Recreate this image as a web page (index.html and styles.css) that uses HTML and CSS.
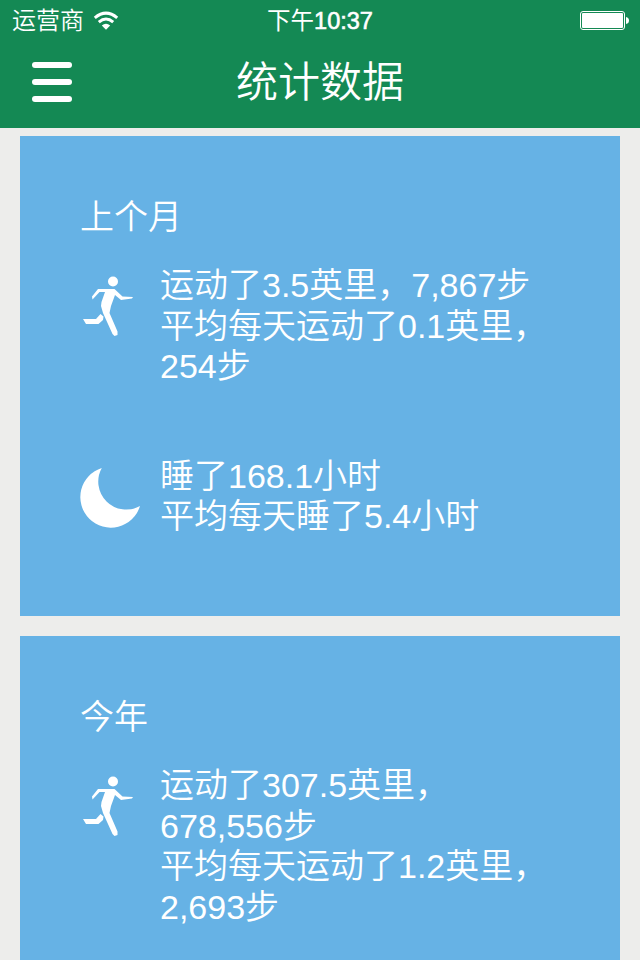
FILE: index.html
```
<!DOCTYPE html>
<html lang="zh-CN">
<head>
    <meta charset="UTF-8">
    <meta name="viewport" content="width=device-width, initial-scale=1.0">
    <title>统计数据</title>
    <link rel="stylesheet" href="styles.css">
</head>
<body>
    <header class="header">
        <div class="status-bar">
            <div class="carrier">
                <span>运营商</span>
                <svg class="wifi" viewBox="0 0 26 20" width="26" height="20">
                    <path d="M1.8 6.8 Q13 -2.6 24.2 6.8" fill="none" stroke="#fff" stroke-width="3"/>
                    <path d="M5.8 11.1 Q13 5 20.2 11.1" fill="none" stroke="#fff" stroke-width="3"/>
                    <path d="M8.8 14.4 Q13 11 17.2 14.4 L13 18.8 Z" fill="#fff"/>
                </svg>
            </div>
            <div class="time">下午<span class="clock">10:37</span></div>
            <div class="battery">
                <svg viewBox="0 0 50 20" width="50" height="20">
                    <rect x="0.5" y="0.5" width="44" height="18" rx="2.5" fill="none" stroke="#fff"/>
                    <rect x="2" y="2" width="41" height="15" rx="1" fill="#fff"/>
                    <path d="M46 6 Q49 6.5 49 9.5 Q49 12.5 46 13 Z" fill="#fff"/>
                </svg>
            </div>
        </div>
        <div class="nav-bar">
            <button class="menu-btn" aria-label="菜单">
                <span></span>
                <span></span>
                <span></span>
            </button>
            <h1 class="title">统计数据</h1>
        </div>
    </header>

    <main class="cards">
        <section class="card">
            <h2 class="card-title">上个月</h2>
            <div class="stat stat-move">
                <svg class="icon" viewBox="0 0 60 60" width="60" height="60">
                    <circle cx="33" cy="5.5" r="5" fill="#fff"/>
                    <path d="M18 13 L34.5 13 L42.5 20.500 L53 21 L52 22.500 L41 24 L35 19 L31 30 L29.500 37 L37.500 55.500 L37.500 59 L34.500 60 L32.500 58 L23 37 L21 30 L21.500 26 L25 16 L19.500 16 L12.500 23.500 L12 20.500 Z M20.500 38 L23.500 40.500 L23 44 L18.500 48 L6 48 L3 43 L16 43 Z" fill="#fff"/>
                </svg>
                <p>运动了3.5英里，7,867步<br>平均每天运动了0.1英里，<br>254步</p>
            </div>
            <div class="stat stat-sleep">
                <svg class="icon" viewBox="0 0 60 60" width="60" height="60">
                    <path d="M21.800 1 A30.500 30.500 0 1 0 60 39 A28 28 0 0 1 21.800 1 Z" fill="#fff"/>
                </svg>
                <p>睡了168.1小时<br>平均每天睡了5.4小时</p>
            </div>
        </section>

        <section class="card">
            <h2 class="card-title">今年</h2>
            <div class="stat stat-move">
                <svg class="icon" viewBox="0 0 60 60" width="60" height="60">
                    <circle cx="33" cy="5.5" r="5" fill="#fff"/>
                    <path d="M18 13 L34.5 13 L42.5 20.500 L53 21 L52 22.500 L41 24 L35 19 L31 30 L29.500 37 L37.500 55.500 L37.500 59 L34.500 60 L32.500 58 L23 37 L21 30 L21.500 26 L25 16 L19.500 16 L12.500 23.500 L12 20.500 Z M20.500 38 L23.500 40.500 L23 44 L18.500 48 L6 48 L3 43 L16 43 Z" fill="#fff"/>
                </svg>
                <p>运动了307.5英里，<br>678,556步<br>平均每天运动了1.2英里，<br>2,693步</p>
            </div>
        </section>
    </main>
</body>
</html>
```
FILE: styles.css
```
* {
    box-sizing: border-box;
}

body {
    display: flex;
    flex-direction: column;
    margin: 0;
    height: 960px;
    overflow: hidden;
    background-color: #ededeb;
    color: #fff;
    font-family: "Liberation Sans", "Noto Sans CJK SC", sans-serif;
    font-weight: 350;
}

.header {
    flex: none;
    height: 128px;
    background-color: #148954;
}

/* status bar */
.status-bar {
    display: grid;
    grid-template-columns: 1fr auto 1fr;
    align-items: center;
    height: 42px;
    padding: 0 10px 0 12px;
    font-size: 24px;
    line-height: 42px;
}

.carrier {
    display: flex;
    align-items: center;
    gap: 9px;
}

.wifi {
    flex: none;
    margin-bottom: 1px;
}

.time {
    font-size: 23.5px;
    font-weight: 400;
    margin-right: 2px;
}

.clock {
    -webkit-text-stroke: 0.6px #fff;
}

.battery {
    display: flex;
    justify-content: flex-end;
    margin-bottom: 1px;
}

/* navigation bar */
.nav-bar {
    display: grid;
    grid-template-columns: 72px 1fr 72px;
    align-items: center;
    height: 80px;
}

.menu-btn {
    display: flex;
    flex-direction: column;
    gap: 11px;
    margin-left: 32px;
    padding: 0;
    width: 40px;
    background-color: transparent;
    border: none;
    cursor: pointer;
}

.menu-btn span {
    height: 6px;
    border-radius: 3px;
    background-color: #fff;
}

.title {
    margin: 0;
    padding-top: 2px;
    font-size: 42px;
    font-weight: 350;
    line-height: 60px;
    text-align: center;
}

/* cards */
.cards {
    flex: 1;
    display: flex;
    flex-direction: column;
    gap: 20px;
    min-height: 0;
    overflow: hidden;
    padding: 8px 20px 0;
}

.card {
    flex: none;
    height: 480px;
    padding: 61px 60px 0;
    background-color: #66b2e5;
}

.card-title {
    margin: 0;
    font-size: 34px;
    font-weight: 350;
    line-height: 40px;
}

.stat {
    display: flex;
    gap: 20px;
    font-size: 34px;
    line-height: 40.5px;
}

.stat p {
    margin: 0;
    white-space: nowrap;
}

.stat-move {
    margin-top: 28px;
}

.stat-sleep {
    margin-top: 69px;
}

.icon {
    flex: none;
    margin-top: 11px;
    overflow: visible;
}
```
